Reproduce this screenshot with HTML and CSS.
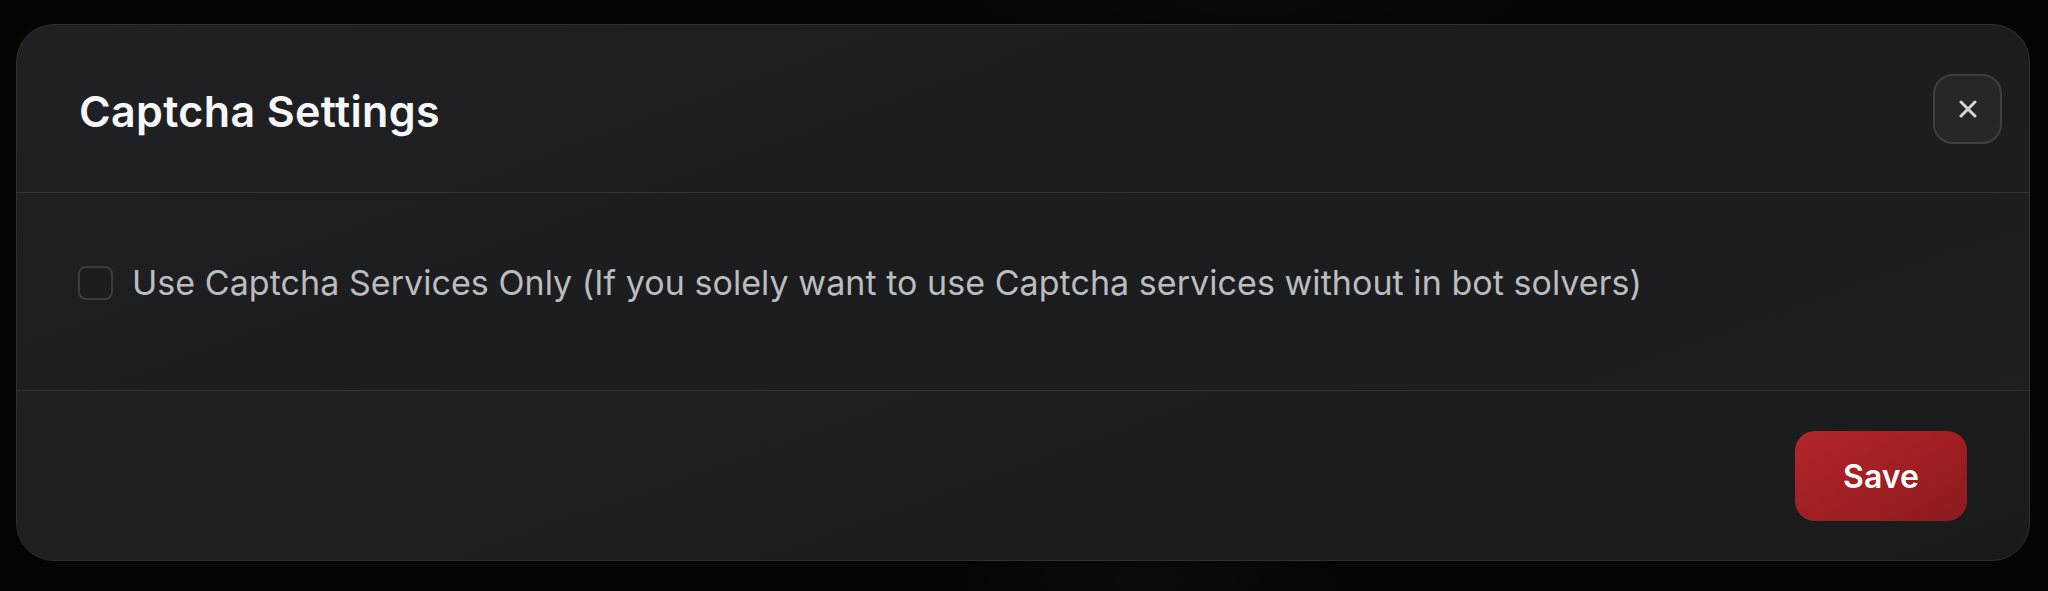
FILE: index.html
```html
<!DOCTYPE html>
<html lang="en">
<head>
<meta charset="utf-8">
<title>Captcha Settings</title>
<link rel="stylesheet" href="styles.css">
</head>
<body>
<div class="backdrop">
  <div class="modal">
    <div class="modal-header">
      <h2 class="modal-title">Captcha Settings</h2>
      <button class="close-btn" aria-label="Close">
        <svg width="18" height="18" viewBox="0 0 18 18"><path d="M2 2 L16 16 M16 2 L2 16" stroke="#d4d4d6" stroke-width="3" stroke-linecap="round"/></svg>
      </button>
    </div>
    <div class="modal-body">
      <label class="check-row">
        <span class="checkbox"></span>
        <span class="check-label">Use Captcha Services Only (If you solely want to use Captcha services without in bot solvers)</span>
      </label>
    </div>
    <div class="modal-footer">
      <button class="save-btn">Save</button>
    </div>
  </div>
</div>
</body>
</html>
```
FILE: styles.css
```css
* { box-sizing: border-box; }
html, body { margin: 0; padding: 0; }
body {
  background: #040404;
  font-family: "Inter", "Liberation Sans", sans-serif;
  width: 2048px;
  height: 591px;
  overflow: hidden;
}
.backdrop {
  padding: 24px 18px 30px 16px;
  height: 591px;
  background:
    radial-gradient(ellipse 200px 60px at 1150px 580px, rgba(255,255,255,0.03), transparent),
    radial-gradient(ellipse 300px 40px at 1250px 5px, rgba(255,255,255,0.02), transparent),
    #040404;
}
.modal {
  position: relative;
  height: 537px;
  border: 1px solid #2f3033;
  border-radius: 38px;
  background: linear-gradient(160deg, #202124 0%, #1b1c1e 45%, #1e1f21 100%);
  display: flex;
  flex-direction: column;
  overflow: hidden;
}
.modal-header {
  height: 168px;
  padding: 5px 0 0 62px;
  display: flex;
  align-items: center;
  border-bottom: 1px solid #323336;
}
.modal-title {
  margin: 0;
  color: #f7f7f8;
  font-size: 43px;
  font-weight: 600;
  letter-spacing: 0.35px;
}
.close-btn {
  position: absolute;
  top: 49px;
  right: 27px;
  width: 69px;
  height: 70px;
  border-radius: 20px;
  border: 2px solid #3e3f42;
  background: #252629;
  display: flex;
  align-items: center;
  justify-content: center;
  padding: 0;
}
.modal-body {
  height: 198px;
  padding: 69px 62px 0 61px;
  border-bottom: 1px solid #2f3033;
}
.check-row {
  display: flex;
  align-items: center;
  gap: 19px;
}
.checkbox {
  width: 35px;
  height: 34px;
  border: 2px solid #3b3c3f;
  border-radius: 8px;
  background: #1c1d1f;
  flex: none;
}
.check-label {
  color: #bcbcbe;
  font-size: 34px;
  font-weight: 400;
  letter-spacing: 0.05px;
}
.modal-footer {
  flex: 1;
  display: flex;
  justify-content: flex-end;
  align-items: flex-start;
  padding: 40px 62px 0;
  background: linear-gradient(160deg, #1f2022 0%, #1c1d1f 60%, #191a1c 100%);
}
.save-btn {
  width: 172px;
  height: 90px;
  border: none;
  border-radius: 20px;
  background: linear-gradient(150deg, #b3252a 0%, #a01f23 50%, #8c1b1e 100%);
  color: #ffffff;
  font-family: "Inter", "Liberation Sans", sans-serif;
  font-size: 32px;
  font-weight: 600;
  padding: 0;
}
```
